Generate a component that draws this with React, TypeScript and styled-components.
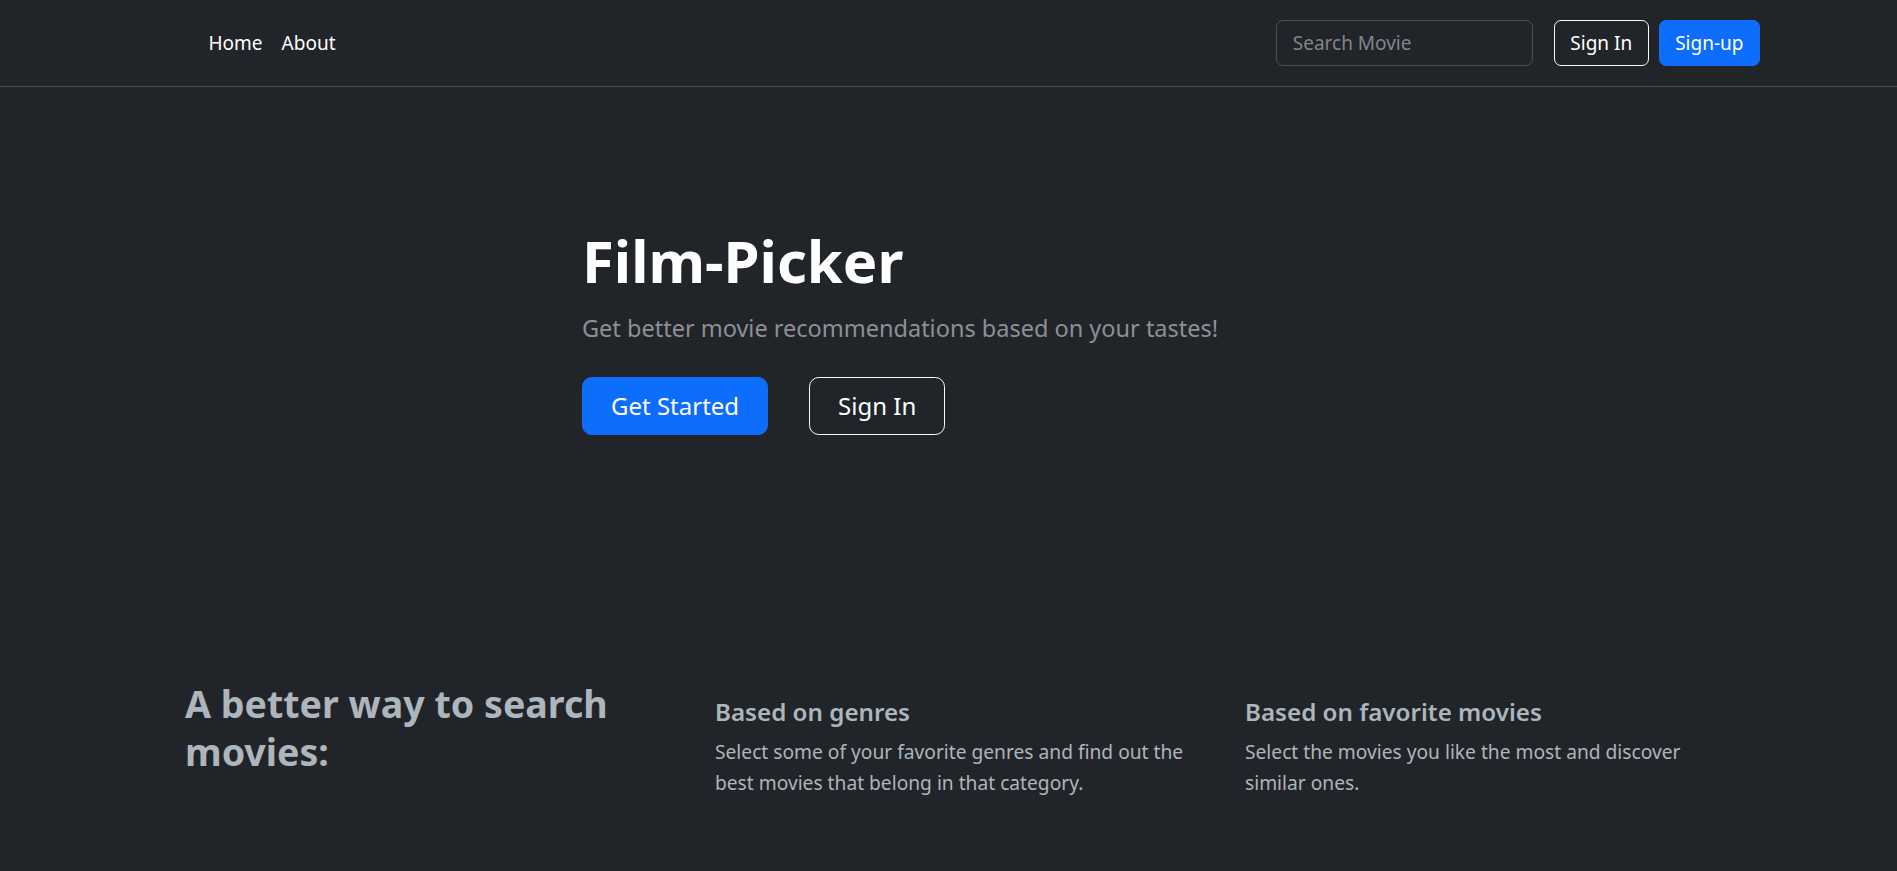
import React from "react";
import styled, { createGlobalStyle, css } from "styled-components";

const Global = createGlobalStyle`
  html, body { margin: 0; padding: 0; background: #212529; }
  body {
    font-family: "Noto Sans", "Open Sans", sans-serif;
    color: #dee2e6;
    font-size: 19.36px;
    line-height: 1.5;
  }
  * { box-sizing: border-box; }
`;

const Page = styled.div`
  min-height: 871px;
  background: #212529;
  display: flex;
  flex-direction: column;
`;

const NavBar = styled.header`
  height: 87px;
  border-bottom: 1px solid #495057;
  display: flex;
  align-items: center;
  justify-content: space-between;
  padding: 0 137px 0 199px;
`;

const NavLinks = styled.nav`
  display: flex;
`;

const NavLink = styled.a`
  color: #fff;
  text-decoration: none;
  padding: 10px 9.5px;
  font-size: 19px;
`;

const NavRight = styled.form`
  display: flex;
  align-items: center;
  gap: 10px;
`;

const SearchInput = styled.input`
  width: 257px;
  height: 46px;
  background: #212529;
  border: 1px solid #495057;
  border-radius: 7px;
  color: #dee2e6;
  font: inherit;
  font-size: 19px;
  padding: 0 16px;
  margin-right: 11px;
  outline: none;
  &::placeholder { color: #80868c; }
`;

const Button = styled.button<{ $variant: "primary" | "outline"; $size?: "lg" }>`
  font-family: inherit;
  cursor: pointer;
  line-height: 1.5;
  color: #fff;
  ${(p) =>
    p.$variant === "primary"
      ? css`background: #0d6efd; border: 1px solid #0d6efd;`
      : css`background: transparent; border: 1px solid #f8f9fa;`}
  ${(p) =>
    p.$size === "lg"
      ? css`
          font-size: 24px;
          height: 58px;
          padding: 0 28px;
          border-radius: 9.7px;
        `
      : css`
          font-size: 19px;
          height: 46px;
          padding: 0 15.5px;
          border-radius: 7px;
        `}
`;

const Hero = styled.section`
  padding: 139px 0 0 582px;
  height: 593px;
`;

const Title = styled.h1`
  margin: 0;
  font-size: 58px;
  font-weight: 700;
  line-height: 1.2;
  color: #fff;
`;

const Lead = styled.p`
  margin: 15px 0 31px;
  font-size: 23.5px;
  line-height: 1.5;
  color: #8c9094;
`;

const Actions = styled.div`
  display: flex;
  gap: 41px;
`;

const Features = styled.section`
  display: grid;
  grid-template-columns: repeat(3, 480px);
  column-gap: 50px;
  padding: 0 0 0 185px;
`;

const FeatureHeading = styled.h2`
  margin: 0;
  font-size: 37.6px;
  font-weight: 700;
  line-height: 1.28;
  color: #adb5bd;
`;

const Feature = styled.div`
  padding-top: 17px;
`;

const FeatureTitle = styled.h3`
  margin: 0 0 10px;
  font-size: 24.2px;
  font-weight: 600;
  line-height: 1.2;
  color: #adb5bd;
`;

const FeatureText = styled.p`
  margin: 0;
  font-size: 19.2px;
  line-height: 1.62;
  color: #adb5bd;
`;

export default function App() {
  return (
    <Page>
      <Global />
      <NavBar>
        <NavLinks>
          <NavLink href="#">Home</NavLink>
          <NavLink href="#">About</NavLink>
        </NavLinks>
        <NavRight onSubmit={(e) => e.preventDefault()}>
          <SearchInput placeholder="Search Movie" />
          <Button type="button" $variant="outline">Sign In</Button>
          <Button type="button" $variant="primary">Sign-up</Button>
        </NavRight>
      </NavBar>
      <Hero>
        <Title>Film-Picker</Title>
        <Lead>Get better movie recommendations based on your tastes!</Lead>
        <Actions>
          <Button type="button" $variant="primary" $size="lg">Get Started</Button>
          <Button type="button" $variant="outline" $size="lg">Sign In</Button>
        </Actions>
      </Hero>
      <Features>
        <FeatureHeading>A better way to search movies:</FeatureHeading>
        <Feature>
          <FeatureTitle>Based on genres</FeatureTitle>
          <FeatureText>
            Select some of your favorite genres and find out the best movies that belong in that category.
          </FeatureText>
        </Feature>
        <Feature>
          <FeatureTitle>Based on favorite movies</FeatureTitle>
          <FeatureText>Select the movies you like the most and discover similar ones.</FeatureText>
        </Feature>
      </Features>
    </Page>
  );
}
